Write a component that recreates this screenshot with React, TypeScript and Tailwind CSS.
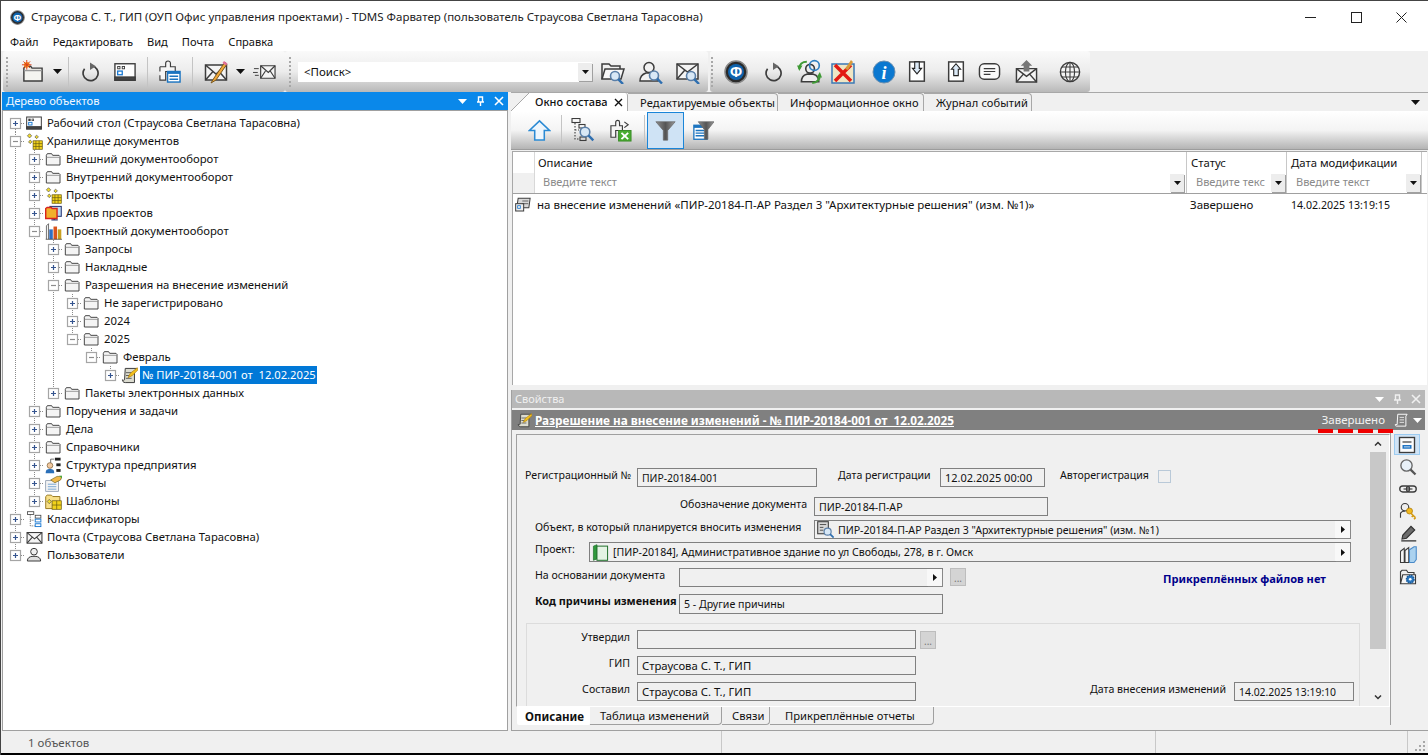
import type { ReactNode } from "react";

const ui = "font-['Noto_Sans','Liberation_Sans',sans-serif]";

function Ico({ s = 16, children }: { s?: number; children: ReactNode }) {
  return (
    <svg width={s} height={s} viewBox="0 0 24 24" fill="none" stroke="#3c3c3c" strokeWidth={1.5} className="shrink-0">
      {children}
    </svg>
  );
}

const Mag = ({ x = 15, y = 15, r = 4.5 }: { x?: number; y?: number; r?: number }) => (
  <>
    <circle cx={x} cy={y} r={r} fill="#d8e8f6" stroke="#5a7fa8" strokeWidth={1.6} />
    <path d={`M${x + r * 0.7} ${y + r * 0.7}L${x + r + 3.5} ${y + r + 3.5}`} stroke="#2f6fb0" strokeWidth={2.4} />
  </>
);

const Envelope = () => (
  <>
    <rect x="1.5" y="5" width="21" height="15" fill="#f4f4f4" />
    <path d="M1.5 5L12 14L22.5 5M1.5 20L9 11.5M22.5 20L15 11.5" />
  </>
);

const AppLogo = ({ s = 24 }: { s?: number }) => (
  <Ico s={s}>
    <circle cx="12" cy="12" r="11" fill="#2a2a2a" stroke="#888" />
    <circle cx="12" cy="12" r="8" fill="#0f63ad" stroke="none" />
    <text x="12" y="17" fontSize="14" fontWeight="700" textAnchor="middle" fill="#fff" stroke="none">Ф</text>
  </Ico>
);

const NewFolder = () => (
  <Ico s={23}>
    <path d="M3 22V8.5L4.5 6.5H10L11.5 8.5H22V22Z" fill="#f4f4f0" stroke="#3c3c3c" />
    <path d="M3 11H22" stroke="#999" />
    <circle cx="6" cy="5" r="3" fill="#f5a623" stroke="none" />
    <path d="M6 0V10M1 5H11M2.5 1.5L9.5 8.5M9.5 1.5L2.5 8.5" stroke="#e0401c" strokeWidth={1} />
  </Ico>
);

const Refresh = ({ s = 20 }: { s?: number }) => (
  <Ico s={s}>
    <path d="M14 4.5A9 9 0 1 1 5.5 8" strokeWidth={2} />
    <path d="M12 0.5L19 5L12 9.5Z" fill="#666" stroke="none" />
  </Ico>
);

const WinIcon = ({ s = 22 }: { s?: number }) => (
  <Ico s={s}>
    <rect x="1" y="3" width="22" height="18" fill="#fdfdfd" />
    <rect x="1" y="17.5" width="22" height="3.5" fill="#444" />
    <rect x="4" y="6" width="2.5" height="2.5" strokeWidth={1} />
    <rect x="9" y="6" width="2.5" height="2.5" strokeWidth={1} />
    <rect x="4" y="11" width="5" height="4" stroke="#1777d1" strokeWidth={1.4} />
  </Ico>
);

const PuzzleTable = () => (
  <Ico s={23}>
    <path d="M2 7H8V3.5A2.5 2.5 0 0 1 13 3.5V7H18V12H8V21H2V16M2 12V7" fill="#f5f5f5" strokeWidth={1.2} />
    <rect x="10" y="12" width="13" height="11" fill="#fff" stroke="#1b74c0" />
    <rect x="10" y="12" width="13" height="2.5" fill="#1b74c0" stroke="none" />
    <path d="M12 17H21M12 20H21" stroke="#1b74c0" />
  </Ico>
);

const MailPencil = () => (
  <Ico s={24}>
    <Envelope />
    <path d="M21 2L10 18L7 23L12 20L23 4Z" fill="#f2a93b" stroke="#7b5a20" strokeWidth={1} />
    <path d="M20 1L23.5 3.5L22 5.5L18.5 3Z" fill="#e0709a" stroke="none" />
  </Ico>
);

const MailFast = () => (
  <Ico s={23}>
    <path d="M8 6H23V19H8Z" fill="#f4f4f4" strokeWidth={1.2} />
    <path d="M8 6L16 13L23 6M8 19L13 11.5M23 19L18 11.5" strokeWidth={1.2} />
    <path d="M1 9H6M0 13H5M2 16H6" strokeWidth={1} />
  </Ico>
);

const FolderSearch = () => (
  <Ico s={24}>
    <path d="M1 19V4H8L10 6H19V9" fill="#f0f0f0" />
    <path d="M1 19L4 9H23L20 19Z" fill="#f8f8f8" />
    <Mag x={14} y={16} r={4.5} />
  </Ico>
);

const Person = () => (
  <>
    <circle cx="10" cy="7.5" r="5" fill="#f2f2f2" />
    <path d="M1 21C1 16 4 14 7 13H13C16 14 19 16 19 21Z" fill="#f2f2f2" />
  </>
);

const UserSearch = () => (
  <Ico s={24}>
    <Person />
    <Mag x={15} y={15.5} r={4.5} />
  </Ico>
);

const MailSearch = () => (
  <Ico s={24}>
    <path d="M1 4H22V19H1Z" fill="#f4f4f4" />
    <path d="M1 4L11.5 12L22 4M1 19L8.5 10.5" />
    <Mag x={15} y={16} r={4.5} />
  </Ico>
);

const UsersSync = () => (
  <Ico s={26}>
    <circle cx="13" cy="9" r="4" fill="#eee" />
    <path d="M5 21C5 16 8 14.5 10 14H16C18 14.5 21 16 21 21Z" fill="#eee" />
    <circle cx="17" cy="6" r="4.5" stroke="#2f7fc0" />
    <path d="M3 9C3 5 6 2.5 10 2.5" stroke="#3f9a35" strokeWidth={2} />
    <path d="M1 6H6L3 11Z" fill="#3f9a35" stroke="none" />
    <path d="M22 15C22 19 19 22 15 22" stroke="#3f9a35" strokeWidth={2} />
    <path d="M19 17H24L22 12Z" fill="#3f9a35" stroke="none" />
  </Ico>
);

const RedCross = () => (
  <Ico s={24}>
    <rect x="1" y="4" width="22" height="19" fill="#efe6c4" stroke="#3b78b5" strokeWidth={1.5} />
    <path d="M4 5L20 21M20 5L4 21" stroke="#e21a12" strokeWidth={3.5} />
    <path d="M20 0L14 9L17 10L22 2Z" fill="#d79a3a" stroke="none" />
  </Ico>
);

const InfoDot = () => (
  <Ico s={24}>
    <circle cx="12" cy="12" r="11" fill="#0b78d0" stroke="#6a8fb0" strokeWidth={1} />
    <text x="12" y="19" fontSize="18" fontWeight="700" fontStyle="italic" textAnchor="middle" fill="#fff" stroke="none" fontFamily="Liberation Serif">i</text>
  </Ico>
);

const DocArrow = ({ up }: { up?: boolean }) => (
  <Ico s={22}>
    <rect x="4" y="1" width="16" height="21" fill="#fff" strokeWidth={1.6} />
    {up ? (
      <path d="M12 3L17 9H14.5V16H9.5V9H7Z" fill="#dbe9f6" stroke="#222" strokeWidth={1.2} />
    ) : (
      <path d="M12 14L17 8H14.5V1H9.5V8H7Z" fill="#dbe9f6" stroke="#222" strokeWidth={1.2} />
    )}
  </Ico>
);

const NoteIcon = () => (
  <Ico s={23}>
    <rect x="1.5" y="4" width="21" height="16" rx="5" fill="#fafafa" />
    <path d="M6 9H18M6 12H18M6 15H13" strokeWidth={1.2} />
  </Ico>
);

const MailUp = () => (
  <Ico s={23}>
    <path d="M1.5 9H22.5V23H1.5Z" fill="#f4f4f4" />
    <path d="M1.5 9L12 17L22.5 9M1.5 23L9 14.5M22.5 23L15 14.5" />
    <path d="M12 0L18 6H15V12H9V6H6Z" fill="#777" stroke="none" />
  </Ico>
);

const Globe = () => (
  <Ico s={22}>
    <circle cx="12" cy="12" r="10.5" fill="#f4f4f4" />
    <ellipse cx="12" cy="12" rx="5" ry="10.5" strokeWidth={1.2} />
    <path d="M12 1.5V22.5M1.5 12H22.5M3 6.5H21M3 17.5H21" strokeWidth={1.2} />
  </Ico>
);

const UpArrow = () => (
  <Ico s={23}>
    <path d="M12 2L22.5 12H17V22H7V12H1.5Z" fill="#eef6fd" stroke="#2a8ad4" strokeWidth={1.6} />
  </Ico>
);

const TreeSearch = () => (
  <Ico s={24}>
    <rect x="1" y="0.5" width="8" height="4" strokeWidth={1.1} />
    <path d="M4 5V21H9M4 12H8" strokeDasharray="1.5 1.5" strokeWidth={1.1} />
    <rect x="8" y="6.5" width="6" height="3.5" strokeWidth={1.1} />
    <rect x="9" y="19" width="6" height="3.5" strokeWidth={1.1} />
    <Mag x={14} y={14} r={4.8} />
  </Ico>
);

const PuzzleExcel = () => (
  <Ico s={23}>
    <path d="M2 7H7V3.5A2 2 0 0 1 11 3.5V7H14V12H7V19H2Z" fill="#f5f5f5" strokeWidth={1.2} />
    <path d="M16 3L20 6L16 9" strokeWidth={1.2} />
    <rect x="10" y="12" width="13" height="11" fill="#49ad30" stroke="#3a8a28" strokeWidth={1} />
    <path d="M13 14.5L20 21M20 14.5L13 21" stroke="#fff" strokeWidth={2} />
  </Ico>
);

const Funnel = ({ list }: { list?: boolean }) => (
  <Ico s={21}>
    <defs>
      <linearGradient id="fn" x1="0" y1="0" x2="1" y2="0">
        <stop offset="0" stopColor="#8d8d8d" />
        <stop offset="0.5" stopColor="#555" />
        <stop offset="1" stopColor="#9a9a9a" />
      </linearGradient>
    </defs>
    {list && (
      <>
        <rect x="1" y="6" width="15" height="16" fill="#fff" stroke="#1b74c0" />
        <rect x="1" y="6" width="15" height="3" fill="#1b74c0" stroke="none" />
        <path d="M3 12H13M3 15H13M3 18H13" stroke="#1b74c0" />
      </>
    )}
    <path d={list ? "M6 2H24L17 11V22H13V11Z" : "M1 2H23L14.5 12V23H9.5V12Z"} fill="url(#fn)" stroke="#666" strokeWidth={0.8} />
  </Ico>
);

const Folder = () => (
  <Ico s={16}>
    <path d="M2 21V6.5L3.5 4H10L11.5 6.5H21L22.5 8V21Z" fill="#f4f4f4" strokeWidth={1.4} />
    <path d="M2 9.5H22.5" stroke="#888" strokeWidth={1.2} />
  </Ico>
);

const Storage = () => (
  <Ico s={17}>
    <rect x="10" y="11" width="13" height="12" fill="#f2d21a" stroke="#6a5a10" strokeWidth={1} />
    <path d="M14 11V23M18.5 11V23M10 15H23M10 19H23" stroke="#6a5a10" strokeWidth={1} />
    <path d="M5 1L8 4L5 7L2 4Z" fill="#f5dd2a" stroke="#555" strokeWidth={1} />
    <path d="M15 3L17.5 5.5L15 8L12.5 5.5Z" fill="#f5dd2a" stroke="#555" strokeWidth={1} />
    <path d="M6 10L8.5 12.5L6 15L3.5 12.5Z" fill="#f5dd2a" stroke="#555" strokeWidth={1} />
  </Ico>
);

const DeskIcon = () => <WinIcon s={16} />;

const ArchiveIcon = () => (
  <Ico s={17}>
    <rect x="7" y="2" width="16" height="14" fill="#bcd7f1" stroke="#2c3c78" />
    <path d="M13 16V20M9 21H18" stroke="#2c3c78" strokeWidth={2} />
    <path d="M1 19V5L3 3.5H9L10 5H17V19Z" fill="#f1b02c" stroke="#d8241e" strokeWidth={2} />
  </Ico>
);

const BooksIcon = () => (
  <Ico s={17}>
    <path d="M2 23V4L5 1V23" fill="#f2f2f2" strokeWidth={1} />
    <rect x="6" y="9" width="5" height="14" fill="#2f6fc4" stroke="none" />
    <rect x="12" y="5" width="5" height="18" fill="#d9541e" stroke="none" />
    <rect x="18" y="9" width="5" height="14" fill="#c9a020" stroke="none" />
    <path d="M1 23H24" strokeWidth={1} />
  </Ico>
);

const PermitDoc = ({ s = 17 }: { s?: number }) => (
  <Ico s={s}>
    <path d="M6 2H22L19 6V22H6C3 22 2 20 2 18C3 19 4 19 5 18Z" fill="#dcdcd0" strokeWidth={1.4} />
    <path d="M7 8H15M7 12H12M7 16H15" strokeWidth={1.1} />
    <path d="M23 1L13 9L10 15L16 12L24 4Z" fill="#f2c01e" stroke="#b0800c" strokeWidth={1} />
  </Ico>
);

const OrgIcon = () => (
  <Ico s={17}>
    <circle cx="7" cy="12" r="4" fill="#f2c9a0" stroke="#7a5a30" strokeWidth={1} />
    <path d="M1 23C1 18 3 17 7 17C11 17 13 18 13 23Z" fill="#2a6fb8" stroke="none" />
    <path d="M8 3H13M8 3V8" strokeWidth={1} />
    <rect x="14" y="1" width="8" height="4" fill="#222" stroke="none" />
    <rect x="16" y="9" width="6" height="4" fill="#222" stroke="none" />
    <rect x="16" y="17" width="6" height="4" fill="#222" stroke="none" />
  </Ico>
);

const ReportIcon = () => (
  <Ico s={17}>
    <rect x="1" y="8" width="18" height="15" fill="#f4f4f4" stroke="#7a8aa0" strokeWidth={1} />
    <path d="M4 13H16M4 16.5H16M4 20H16" stroke="#4a8ac8" strokeWidth={1} />
    <path d="M8 7L17 2L24 2L22 7L14 11Z" fill="#f0b84a" stroke="#7a6a20" strokeWidth={1} />
    <path d="M20 1L24 1L24 5Z" fill="#4aa83c" stroke="none" />
  </Ico>
);

const TemplateIcon = () => (
  <Ico s={17}>
    <path d="M1 22V5L3 3H9L11 5H21V22Z" fill="#f8df87" stroke="#9a7a20" strokeWidth={1.4} />
    <rect x="10" y="11" width="13" height="12" fill="#f2d21a" stroke="#6a5a10" strokeWidth={1} />
    <path d="M16.5 11V23M10 17H23" stroke="#6a5a10" strokeWidth={1} />
    <path d="M6 9L9 12L6 15L3 12Z" fill="#f5dd2a" stroke="#555" strokeWidth={1} />
  </Ico>
);

const ClassifierIcon = () => (
  <Ico s={17}>
    <rect x="2" y="1" width="9" height="4" strokeWidth={1.1} />
    <path d="M6 5V21H12M6 13H12" strokeDasharray="1.5 1.5" strokeWidth={1.1} />
    <rect x="13" y="6" width="8" height="4" strokeWidth={1.1} />
    <rect x="13" y="11.5" width="8" height="4" stroke="#1777d1" strokeWidth={1.3} />
    <rect x="13" y="18" width="8" height="4" stroke="#1777d1" strokeWidth={1.3} />
  </Ico>
);

const MailSmall = () => (
  <Ico s={17}>
    <Envelope />
  </Ico>
);

const UserSmall = () => (
  <Ico s={16}>
    <circle cx="12" cy="7" r="5" fill="#f0f0f0" />
    <path d="M2 21C2 16 6 14.5 9 14H15C18 14.5 22 16 22 21Z" fill="#e0e0e0" />
  </Ico>
);

const RowDoc = () => (
  <Ico s={16}>
    <rect x="5" y="2" width="18" height="14" transform="skewX(-8)" fill="#d8d8d8" />
    <rect x="1" y="10" width="12" height="11" fill="#eee" />
    <path d="M11 6H20M11 10H20" strokeWidth={1.1} />
    <rect x="4" y="13" width="4" height="4" stroke="#1777d1" strokeWidth={1.2} />
  </Ico>
);

const ObjSearch = () => (
  <Ico s={17}>
    <rect x="1" y="1" width="15" height="17" fill="#d8d8d8" />
    <path d="M4 5H13M4 9H9M4 13H9" strokeWidth={1.2} />
    <Mag x={15} y={15} r={5} />
  </Ico>
);

const GreenBook = () => (
  <Ico s={17}>
    <path d="M2 3L7 1V21L2 23Z" fill="#2f9a3c" stroke="#1f6f2a" strokeWidth={1} />
    <rect x="7" y="3" width="15" height="20" fill="#e4f3e4" stroke="#1f6f2a" strokeWidth={1.4} />
  </Ico>
);

const ScrollDoc = ({ light }: { light?: boolean }) => (
  <Ico s={15}>
    <path d="M6 2H21L19 5V21H4C2.5 21 2 20 2 18.5H5Z" fill={light ? "none" : "#eee"} stroke={light ? "#fff" : "#333"} />
    <path d="M9 7H16M9 11H16M9 15H16" stroke={light ? "#fff" : "#333"} strokeWidth={1.2} />
  </Ico>
);

const FormIcon = () => (
  <Ico s={18}>
    <rect x="2" y="2" width="20" height="20" fill="#fbfbfb" strokeWidth={1.8} />
    <path d="M6 8H18" strokeWidth={1.6} />
    <rect x="6" y="12" width="12" height="5" fill="#1f74c4" stroke="none" />
    <path d="M8 14.5H16" stroke="#fff" strokeWidth={1} />
  </Ico>
);

const SearchIcon = () => (
  <Ico s={18}>
    <circle cx="10" cy="10" r="7.5" fill="#e9f1f8" stroke="#666" strokeWidth={1.8} />
    <path d="M15.5 15.5L22 22" stroke="#555" strokeWidth={3} />
  </Ico>
);

const ChainIcon = () => (
  <Ico s={18}>
    <rect x="1" y="8" width="13" height="8" rx="4" strokeWidth={1.8} />
    <rect x="10" y="8" width="13" height="8" rx="4" strokeWidth={1.8} />
    <path d="M6 12H18" strokeWidth={1.5} />
  </Ico>
);

const KeyUserIcon = () => (
  <Ico s={18}>
    <circle cx="8" cy="7" r="5" fill="#eee" />
    <path d="M2 21V15C3 13 5 12 8 12" />
    <circle cx="14" cy="12" r="4" fill="#f2b91e" stroke="#a87a0c" strokeWidth={1} />
    <path d="M16 15L22 21M19 18L17 20M22 21L20 23" stroke="#d49a10" strokeWidth={2.2} />
  </Ico>
);

const PenIcon = () => (
  <Ico s={18}>
    <path d="M5 15L16 3L21 8L10 19L4 20Z" fill="#6c6c6c" stroke="#333" />
    <path d="M3 22.5H23" strokeWidth={1.8} />
  </Ico>
);

const BindersIcon = () => (
  <Ico s={18}>
    <path d="M2 7L7 3V22H2ZM8 6L13 2V22H8Z" fill="#f5f5f5" strokeWidth={1.4} />
    <path d="M14 5L20 1H23V18L20 22H14Z" fill="#abd2ef" stroke="#4a8ac8" strokeWidth={1.4} />
  </Ico>
);

const GearFolderIcon = () => (
  <Ico s={18}>
    <path d="M2 21V5L4 3H10L12 6H20V10" fill="#eee" />
    <path d="M2 21L5 9H22V21Z" fill="#f5f5f5" />
    <circle cx="15" cy="15" r="5" fill="#2a78c0" stroke="#1a5a9a" strokeDasharray="2 1" strokeWidth={2} />
    <circle cx="15" cy="15" r="1.8" fill="#fff" stroke="none" />
  </Ico>
);

// small pieces of chrome
const Caret = ({ light }: { light?: boolean }) => (
  <svg width="9" height="5" viewBox="0 0 9 5" className="shrink-0">
    <path d="M0 0H9L4.5 5Z" fill={light ? "#fff" : "#111"} />
  </svg>
);

const PaneControls = ({ dim }: { dim?: boolean }) => (
  <div className="flex items-center gap-[9px] pr-[4px]">
    <Caret light />
    <svg width="9" height="10" viewBox="0 0 9 10" fill="none" stroke={dim ? "#f0f0f0" : "#fff"} strokeWidth="1.4">
      <path d="M2.5 1H6.5V6H2.5ZM1 6H8M4.5 6V10" />
    </svg>
    <svg width="10" height="10" viewBox="0 0 10 10" fill="none" stroke={dim ? "#f0f0f0" : "#fff"} strokeWidth="1.6">
      <path d="M1 1L9 9M9 1L1 9" />
    </svg>
  </div>
);

const Grip = ({ cls = "" }: { cls?: string }) => (
  <div className={`h-[30px] w-[2px] border-l-2 border-dotted border-[#a8a8a8] shrink-0 ${cls}`} />
);

const Sep = ({ cls = "" }: { cls?: string }) => <div className={`h-[30px] w-px bg-[#c4c4c4] shrink-0 ${cls}`} />;

const strip = "flex h-[41px] items-center rounded-[3px] bg-gradient-to-b from-[#fafafa] via-[#ececec] to-[#b9b9b9]";

type Row = { lv: number; text: string; icon: ReactNode; open?: boolean; last?: boolean; first?: boolean; guides: boolean[]; sel?: boolean };

const F = <Folder />;
const l1 = [true];
const l2 = [true, true];
const l3 = [true, true, true];
const l4 = [true, true, true, false];
const l5 = [true, true, true, false, false];

const rows: Row[] = [
  { lv: 0, text: "Рабочий стол (Страусова Светлана Тарасовна)", icon: <DeskIcon />, first: true, guides: [] },
  { lv: 0, text: "Хранилище документов", icon: <Storage />, open: true, guides: [] },
  { lv: 1, text: "Внешний документооборот", icon: F, guides: l1 },
  { lv: 1, text: "Внутренний документооборот", icon: F, guides: l1 },
  { lv: 1, text: "Проекты", icon: <Storage />, guides: l1 },
  { lv: 1, text: "Архив проектов", icon: <ArchiveIcon />, guides: l1 },
  { lv: 1, text: "Проектный документооборот", icon: <BooksIcon />, open: true, guides: l1 },
  { lv: 2, text: "Запросы", icon: F, guides: l2 },
  { lv: 2, text: "Накладные", icon: F, guides: l2 },
  { lv: 2, text: "Разрешения на внесение изменений", icon: F, open: true, guides: l2 },
  { lv: 3, text: "Не зарегистрировано", icon: F, guides: l3 },
  { lv: 3, text: "2024", icon: F, guides: l3 },
  { lv: 3, text: "2025", icon: F, open: true, last: true, guides: l3 },
  { lv: 4, text: "Февраль", icon: F, open: true, last: true, guides: l4 },
  { lv: 5, text: "№ ПИР-20184-001 от  12.02.2025", icon: <PermitDoc />, last: true, sel: true, guides: l5 },
  { lv: 2, text: "Пакеты электронных данных", icon: F, last: true, guides: l2 },
  { lv: 1, text: "Поручения и задачи", icon: F, guides: l1 },
  { lv: 1, text: "Дела", icon: F, guides: l1 },
  { lv: 1, text: "Справочники", icon: F, guides: l1 },
  { lv: 1, text: "Структура предприятия", icon: <OrgIcon />, guides: l1 },
  { lv: 1, text: "Отчеты", icon: <ReportIcon />, guides: l1 },
  { lv: 1, text: "Шаблоны", icon: <TemplateIcon />, last: true, guides: l1 },
  { lv: 0, text: "Классификаторы", icon: <ClassifierIcon />, guides: [] },
  { lv: 0, text: "Почта (Страусова Светлана Тарасовна)", icon: <MailSmall />, guides: [] },
  { lv: 0, text: "Пользователи", icon: <UserSmall />, last: true, guides: [] },
];

function Guide({ on }: { on: boolean }) {
  return (
    <svg width="19" height="18" className="shrink-0">
      {on && <path d="M9.5 0V18" stroke="#8a8a8a" strokeDasharray="1 1" />}
    </svg>
  );
}

function Expander({ row }: { row: Row }) {
  const top = row.first ? 9 : 0;
  const bottom = row.last ? 9 : 18;
  return (
    <svg width="19" height="18" className="shrink-0">
      <path d={`M9.5 ${top}V${bottom}`} stroke="#8a8a8a" strokeDasharray="1 1" />
      <path d="M15 9.5H20" stroke="#8a8a8a" strokeDasharray="1 1" />
      <rect x="4.5" y="4.5" width="10" height="10" fill="#fff" stroke="#a5a5a5" strokeWidth="1.2" />
      <path d={row.open ? "M7 9.5H12" : "M7 9.5H12M9.5 7V12"} stroke={row.open ? "#8c8c8c" : "#35558f"} strokeWidth="1.2" />
    </svg>
  );
}

function TreeRow({ row }: { row: Row }) {
  return (
    <div className="flex h-[18px] items-center">
      {row.guides.map((g, i) => (
        <Guide key={i} on={g} />
      ))}
      <Expander row={row} />
      <div className="ml-px flex w-[16px] shrink-0 items-center justify-center">{row.icon}</div>
      <span
        className={
          row.sel
            ? "ml-[3px] h-[18px] bg-[#0078d7] pl-[2px] pr-px text-[11.2px] leading-[18px] text-white whitespace-pre"
            : "ml-[5px] text-[11.3px] whitespace-pre"
        }
      >
        {row.text}
      </span>
    </div>
  );
}

function Field({ cls, text, icon, arrow, tcls = "text-[10.6px]" }: { cls: string; text?: string; icon?: ReactNode; arrow?: boolean; tcls?: string }) {
  return (
    <div className={`flex h-[19px] shrink-0 items-center border border-[#808080] bg-[#f0f0f0] ${cls}`}>
      {icon && <span className="ml-[2px] flex shrink-0">{icon}</span>}
      <span className={`ml-[4px] flex-1 truncate whitespace-pre ${tcls}`}>{text}</span>
      {arrow && (
        <div className="flex h-full w-[15px] shrink-0 items-center justify-center bg-[#f8f8f8] shadow-[1px_1px_0_#888]">
          <svg width="4" height="7" viewBox="0 0 4 7">
            <path d="M0 0L4 3.5L0 7Z" fill="#111" />
          </svg>
        </div>
      )}
    </div>
  );
}

const Dots = () => (
  <div className="flex h-[18px] w-[16px] shrink-0 items-end justify-center border border-[#bdbdbd] bg-[#d4d4d4] text-[10px] leading-[14px] text-[#777]">
    ...
  </div>
);

const Label = ({ cls, children }: { cls: string; children: ReactNode }) => (
  <div className={`shrink-0 whitespace-nowrap text-[10.6px] leading-[14px] ${cls}`}>{children}</div>
);

const DropBtn = () => (
  <div className="flex h-[18px] w-[14px] shrink-0 items-center justify-center bg-[#ededed] shadow-[1px_1px_0_#a0a0a0]">
    <svg width="7" height="4" viewBox="0 0 7 4">
      <path d="M0 0H7L3.5 4Z" fill="#111" />
    </svg>
  </div>
);

const FilterCell = ({ cls, text }: { cls: string; text: string }) => (
  <div className={`flex h-[20px] items-center overflow-hidden ${cls}`}>
    <span className="ml-[5px] flex-1 -translate-y-px whitespace-nowrap text-[11px] text-[#8a8a8a]">{text}</span>
    <DropBtn />
  </div>
);

const tabs = [
  { t: "Редактируемые объекты", w: "w-[150px]" },
  { t: "Информационное окно", w: "w-[146px]" },
  { t: "Журнал событий", w: "w-[108px]" },
];

const bottomTabs = [
  { t: "Таблица изменений", w: "w-[132px]", p: "pl-[10px]" },
  { t: "Связи", w: "w-[48px]", p: "pl-[10px]" },
  { t: "Прикреплённые отчеты", w: "w-[164px]", p: "pl-[15px]" },
];

export default function App() {
  return (
    <div className={`flex h-[755px] w-[1428px] flex-col overflow-hidden border-l border-t border-[#444] bg-[#f0f0f0] text-[11.5px] leading-[16px] text-[#111] ${ui}`}>
      {/* title bar */}
      <div className="flex h-[30px] shrink-0 items-center bg-white pl-[9px] pt-[2px]">
        <AppLogo s={15} />
        <span className="ml-[6px] flex-1 truncate text-[#222]">
          Страусова С. Т., ГИП (ОУП Офис управления проектами) - TDMS Фарватер (пользователь Страусова Светлана Тарасовна)
        </span>
        <div className="flex items-center pr-[3px]">
          <div className="flex w-[46px] justify-center">
            <svg width="11" height="11"><path d="M0 5.5H11" stroke="#222" /></svg>
          </div>
          <div className="flex w-[46px] justify-center">
            <svg width="11" height="11"><rect x="0.5" y="0.5" width="10" height="10" fill="none" stroke="#222" /></svg>
          </div>
          <div className="flex w-[46px] justify-center pr-[1px]">
            <svg width="11" height="11"><path d="M0.5 0.5L10.5 10.5M10.5 0.5L0.5 10.5" stroke="#222" /></svg>
          </div>
        </div>
      </div>

      {/* menu */}
      <div className="flex h-[20px] shrink-0 items-center gap-[14px] bg-white pl-[9px] pt-[2px] text-[11.1px]">
        <span>Файл</span>
        <span>Редактировать</span>
        <span>Вид</span>
        <span>Почта</span>
        <span>Справка</span>
      </div>

      {/* toolbars */}
      <div className="flex h-[41px] shrink-0 pl-[2px]">
        <div className={`${strip} w-[282px]`}>
          <Grip cls="ml-[3px]" />
          <div className="ml-[13px]"><NewFolder /></div>
          <div className="ml-[9px]"><Caret /></div>
          <Sep cls="ml-[6px]" />
          <div className="ml-[11px]"><Refresh /></div>
          <div className="ml-[14px]"><WinIcon /></div>
          <Sep cls="ml-[11px]" />
          <div className="ml-[10px]"><PuzzleTable /></div>
          <Sep cls="ml-[11px]" />
          <div className="ml-[11px]"><MailPencil /></div>
          <div className="ml-[8px]"><Caret /></div>
          <div className="ml-[8px]"><MailFast /></div>
        </div>
        <div className={`${strip} w-[423px]`}>
          <Grip cls="ml-[4px]" />
          <div className="ml-[7px] flex h-[20px] w-[294px] items-center bg-white pl-[6px]">
            <span className="flex-1">&lt;Поиск&gt;</span>
            <DropBtn />
          </div>
          <div className="ml-[9px]"><FolderSearch /></div>
          <div className="ml-[14px]"><UserSearch /></div>
          <div className="ml-[13px]"><MailSearch /></div>
        </div>
        <div className={`${strip} ml-[2px] w-[380px]`}>
          <Grip cls="ml-px" />
          <div className="ml-[11px]"><AppLogo /></div>
          <div className="ml-[15px]"><Refresh /></div>
          <div className="ml-[13px]"><UsersSync /></div>
          <div className="ml-[9px]"><RedCross /></div>
          <div className="ml-[17px]"><InfoDot /></div>
          <div className="ml-[10px]"><DocArrow /></div>
          <div className="ml-[17px]"><DocArrow up /></div>
          <div className="ml-[11px]"><NoteIcon /></div>
          <div className="ml-[14px]"><MailUp /></div>
          <div className="ml-[21px]"><Globe /></div>
        </div>
      </div>

      {/* main area */}
      <div className="flex min-h-0 flex-1">
        {/* object tree */}
        <div className="ml-px flex w-[506px] shrink-0 flex-col">
          <div className="flex h-[18px] shrink-0 items-center justify-between bg-[#0a88ea] pl-[4px] text-[11.2px] text-[#f2f8ff]">
            <span>Дерево объектов</span>
            <PaneControls />
          </div>
          <div className="min-h-0 flex-1 border border-[#a0a0a0] bg-white pl-[3px] pt-[3px]">
            {rows.map((r, i) => (
              <TreeRow key={i} row={r} />
            ))}
          </div>
        </div>

        {/* right side */}
        <div className="ml-[3px] flex min-w-0 flex-1 flex-col">
          {/* document tabs */}
          <div className="flex h-[19px] shrink-0 items-end border-t border-[#a8a8a8]">
            <div className="flex h-[18px] w-[117px] items-center rounded-tr-[3px] border-r border-[#a8a8a8] bg-white pr-[4px] font-medium">
              <svg width="18" height="18" className="shrink-0">
                <path d="M0 0H18L0 18Z" fill="#f0f0f0" />
                <path d="M0 18L18 0" stroke="#a8a8a8" />
              </svg>
              <span className="ml-[6px] flex-1 whitespace-nowrap text-[11px]">Окно состава</span>
              <svg width="9" height="9" viewBox="0 0 9 9"><path d="M1 1L8 8M8 1L1 8" stroke="#111" strokeWidth="1.4" /></svg>
            </div>
            {tabs.map((t) => (
              <div key={t.t} className={`flex h-[18px] items-center whitespace-nowrap rounded-tr-[4px] border-r border-t border-[#a8a8a8] pl-[12px] text-[11.1px] tracking-[0.1px] ${t.w}`}>
                {t.t}
              </div>
            ))}
            <div className="ml-auto mr-[8px] self-center"><Caret /></div>
          </div>

          {/* list toolbar */}
          <div className="flex h-[39px] shrink-0 items-center border-b border-[#9c9c9c] bg-gradient-to-b from-white via-[#f4f4f4] to-[#b4b4b4] pl-[17px]">
            <UpArrow />
            <Sep cls="ml-[10px]" />
            <div className="ml-[9px]"><TreeSearch /></div>
            <div className="ml-[14px]"><PuzzleExcel /></div>
            <Sep cls="ml-[12px]" />
            <div className="ml-[2px] flex h-[37px] w-[37px] items-center justify-center border border-[#1a85d8] bg-[#cfe3f5]">
              <Funnel />
            </div>
            <div className="ml-[9px]"><Funnel list /></div>
          </div>

          {/* list */}
          <div className="mx-px mt-px h-[234px] shrink-0 border-l border-t border-[#a8a8a8] bg-white">
            <div className="flex h-[42px] border-b border-[#a0a0a0]">
              <div className="flex w-[22px] shrink-0 flex-col border-r border-[#d8d8d8]">
                <div className="h-[21px]" />
                <div className="flex-1 bg-[#f0f0f0]" />
              </div>
              <div className="flex w-[652px] shrink-0 flex-col border-r border-[#c8c8c8] pl-[3px]">
                <div className="h-[21px] pt-[3px] text-[11.3px]">Описание</div>
                <FilterCell cls="pr-[2px]" text="Введите текст" />
              </div>
              <div className="flex w-[100px] shrink-0 flex-col border-r border-[#c8c8c8] pl-[4px]">
                <div className="h-[21px] pt-[3px] text-[11.3px]">Статус</div>
                <FilterCell cls="pr-px" text="Введите текс" />
              </div>
              <div className="flex w-[135px] shrink-0 flex-col border-r border-[#c8c8c8] pl-[4px]">
                <div className="h-[21px] pt-[3px] text-[11.3px]">Дата модификации</div>
                <FilterCell cls="pr-[1px]" text="Введите текст" />
              </div>
            </div>
            <div className="mt-[2px] flex h-[18px] items-center">
              <div className="ml-[2px] flex w-[22px] shrink-0"><RowDoc /></div>
              <div className="w-[652px] shrink-0 whitespace-nowrap">на внесение изменений «ПИР-20184-П-АР Раздел 3 "Архитектурные решения" (изм. №1)»</div>
              <div className="w-[102px] shrink-0 pl-px">Завершено</div>
              <div className="text-[10.6px]">14.02.2025 13:19:15</div>
            </div>
          </div>

          {/* properties */}
          <div className="mt-[5px] flex min-h-0 flex-1 flex-col border-b border-l border-[#a0a0a0]">
            <div className="mr-[3px] flex h-[18px] shrink-0 items-center justify-between bg-[#b8b8b8] pl-[3px] text-[11px] text-[#f0f0f0]">
              <span>Свойства</span>
              <PaneControls dim />
            </div>
            <div className="relative mr-[3px] mt-[2px] flex h-[20px] shrink-0 items-center bg-[#808080] pl-[5px] pr-[3px] text-white">
              <PermitDoc s={15} />
              <span className="ml-[3px] flex-1 whitespace-pre text-[11.75px] font-bold underline">Разрешение на внесение изменений - № ПИР-20184-001 от  12.02.2025</span>
              <span className="text-[#f2f2f2]">Завершено</span>
              <div className="ml-[9px]"><ScrollDoc light /></div>
              <div className="ml-[4px]"><Caret light /></div>
              <div className="absolute right-[32px] top-[19px] flex gap-[5px]">
                <div className="h-[4px] w-[15px] bg-[#f00000]" />
                <div className="h-[4px] w-[15px] bg-[#f00000]" />
                <div className="h-[4px] w-[15px] bg-[#f00000]" />
                <div className="h-[4px] w-[15px] bg-[#f00000]" />
              </div>
            </div>

            <div className="flex min-h-0 flex-1">
              <div className="flex w-[878px] shrink-0 flex-col pl-[4px] pt-[4px]">
                <div className="flex h-[273px] shrink-0 overflow-hidden border border-b-white border-l-[#a0a0a0] border-r-white border-t-[#a0a0a0]">
                  {/* form */}
                  <div className="w-[853px] shrink-0 overflow-hidden">
                    <div className="mt-[33px] flex pl-[8px]">
                      <Label cls="w-[112px]">Регистрационный №</Label>
                      <Field cls="w-[180px]" text="ПИР-20184-001" tcls="text-[10.4px]" />
                      <Label cls="ml-[21px] w-[102px]">Дата регистрации</Label>
                      <Field cls="w-[105px]" text="12.02.2025 00:00" tcls="text-[11px]" />
                      <Label cls="ml-[15px] w-[98px]">Авторегистрация</Label>
                      <div className="mt-[2px] h-[13px] w-[13px] border border-[#b9c9d8]" />
                    </div>
                    <div className="mt-[10px] flex pl-[163px]">
                      <Label cls="w-[124px] text-right">Обозначение документа</Label>
                      <Field cls="ml-[10px] w-[234px]" text="ПИР-20184-П-АР" />
                    </div>
                    <div className="mt-[4px] flex pl-[18px]">
                      <Label cls="w-[279px]">Объект, в который планируется вносить изменения</Label>
                      <Field cls="w-[537px]" icon={<ObjSearch />} text={'ПИР-20184-П-АР Раздел 3 "Архитектурные решения" (изм. №1)'} arrow />
                    </div>
                    <div className="mt-[3px] flex pl-[18px]">
                      <Label cls="w-[54px]">Проект:</Label>
                      <Field cls="h-[20px] w-[762px]" icon={<GreenBook />} text="[ПИР-20184], Административное здание по ул Свободы, 278, в г. Омск" arrow />
                    </div>
                    <div className="mt-[6px] flex pl-[18px]">
                      <Label cls="w-[144px]">На основании документа</Label>
                      <Field cls="w-[264px]" arrow />
                      <div className="ml-[7px]"><Dots /></div>
                      <div className="ml-[197px] mt-[3px] whitespace-nowrap text-[11.1px] font-bold text-[#00008b]">Прикреплённых файлов нет</div>
                    </div>
                    <div className="mt-[7px] flex pl-[18px]">
                      <Label cls="w-[144px] text-[10.9px] font-bold">Код причины изменения</Label>
                      <Field cls="h-[20px] w-[264px]" text="5 - Другие причины" />
                    </div>
                    <div className="ml-[9px] mt-[9px] h-[120px] w-[834px] border border-[#dcdcdc] pt-[6px]">
                      <div className="flex">
                        <Label cls="w-[103px] text-right">Утвердил</Label>
                        <Field cls="ml-[7px] w-[279px]" />
                        <div className="ml-[4px] mt-px"><Dots /></div>
                      </div>
                      <div className="mt-[7px] flex">
                        <Label cls="w-[103px] text-right">ГИП</Label>
                        <Field cls="ml-[7px] w-[279px]" text="Страусова С. Т., ГИП" tcls="text-[11.3px]" />
                      </div>
                      <div className="mt-[7px] flex">
                        <Label cls="w-[103px] text-right">Составил</Label>
                        <Field cls="ml-[7px] w-[279px]" text="Страусова С. Т., ГИП" tcls="text-[11.3px]" />
                        <Label cls="ml-[174px] w-[132px] text-[10.3px]">Дата внесения изменений</Label>
                        <Field cls="ml-[12px] w-[120px]" text="14.02.2025 13:19:10" tcls="text-[10.4px]" />
                      </div>
                    </div>
                  </div>
                  {/* scrollbar */}
                  <div className="flex w-[16px] shrink-0 flex-col">
                    <div className="flex h-[17px] items-center justify-center">
                      <svg width="8" height="5" viewBox="0 0 8 5" fill="none"><path d="M1 4.5L4 1.5L7 4.5" stroke="#333" strokeWidth="1.5" /></svg>
                    </div>
                    <div className="h-[197px] bg-[#c8c8c8]" />
                    <div className="flex flex-1 items-end justify-center pb-[6px]">
                      <svg width="8" height="5" viewBox="0 0 8 5" fill="none"><path d="M1 0.5L4 3.5L7 0.5" stroke="#333" strokeWidth="1.5" /></svg>
                    </div>
                  </div>
                </div>
                {/* form tabs */}
                <div className="flex h-[18px] shrink-0 pl-[1px]">
                  <div className="flex w-[73px] items-center rounded-b-[2px] bg-white pl-[8px] pt-px font-bold">Описание</div>
                  {bottomTabs.map((t) => (
                    <div key={t.t} className={`flex items-center whitespace-nowrap rounded-br-[4px] border-b border-r border-[#a0a0a0] pt-px text-[11.2px] ${t.w} ${t.p}`}>
                      {t.t}
                    </div>
                  ))}
                </div>
              </div>

              {/* side buttons */}
              <div className="flex h-[295px] w-[33px] shrink-0 flex-col items-center border-l border-[#a0a0a0] pt-[4px]">
                <div className="flex h-[21px] w-[26px] items-center justify-center border border-[#9ccbf0] bg-[#cfe3f5]"><FormIcon /></div>
                <div className="mt-[3px] flex flex-col items-center gap-[4px] pl-[1px]">
                  <div className="h-[18px]"><SearchIcon /></div>
                  <div className="h-[18px]"><ChainIcon /></div>
                  <div className="h-[18px]"><KeyUserIcon /></div>
                  <div className="h-[18px]"><PenIcon /></div>
                  <div className="h-[18px]"><BindersIcon /></div>
                  <div className="h-[18px]"><GearFolderIcon /></div>
                </div>
              </div>
            </div>
          </div>
        </div>
      </div>

      {/* status bar */}
      <div className="flex h-[24px] shrink-0 flex-col border-b-2 border-black">
        <div className="flex flex-1 items-center text-[#555]">
          <div className="w-[720px] pl-[27px] pt-[2px]">1 объектов</div>
          <div className="h-full w-[434px] border-l border-[#c8c8c8]" />
          <div className="h-full w-[252px] border-l border-[#c8c8c8]" />
          <div className="flex h-full flex-1 items-end justify-end border-l border-[#c8c8c8] pb-[2px] pr-[2px]">
            <svg width="11" height="11"><path d="M9 1V3M5 5V7M9 5V7M1 9V11M5 9V11M9 9V11" stroke="#a8a8a8" strokeWidth="2" /></svg>
          </div>
        </div>
      </div>
    </div>
  );
}
